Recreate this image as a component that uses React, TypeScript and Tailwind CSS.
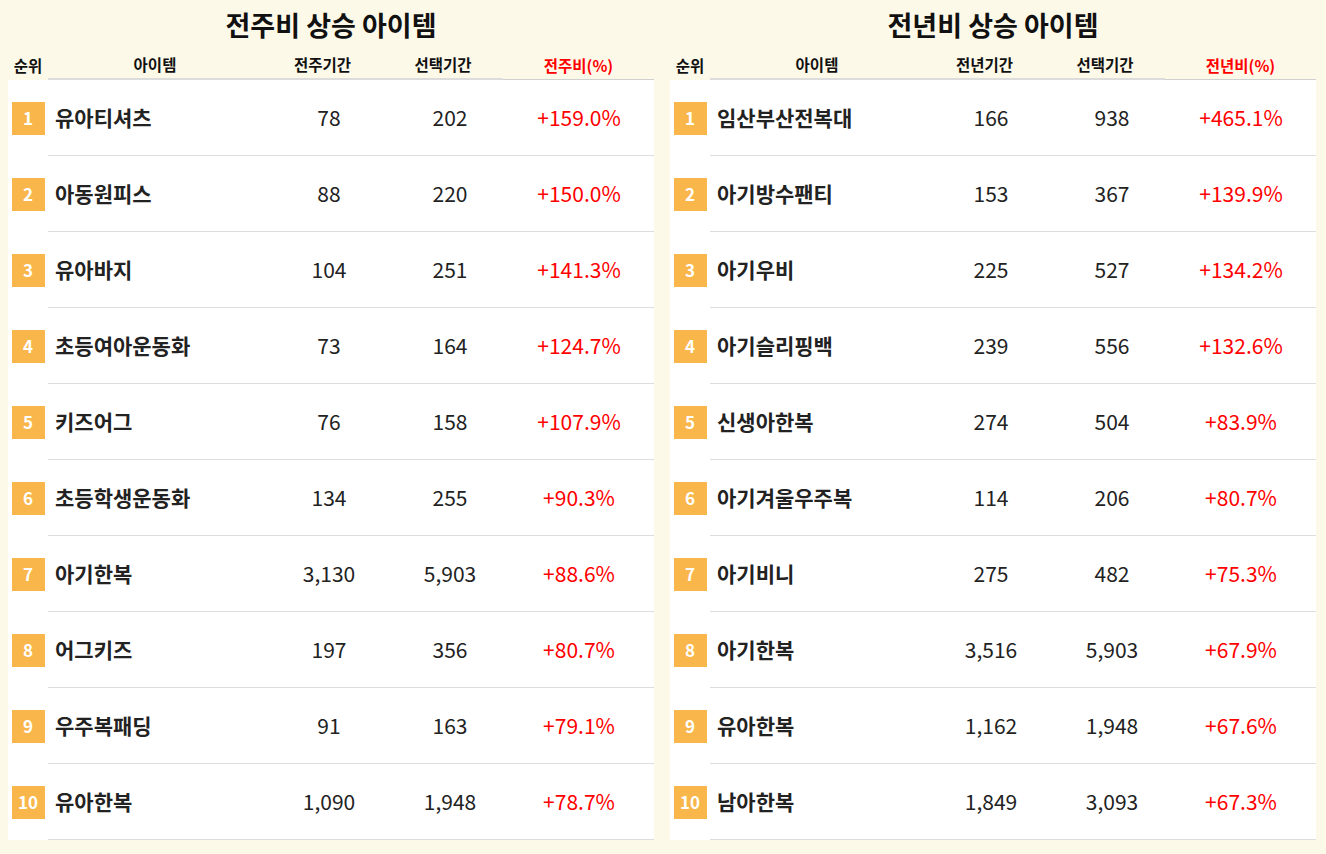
import React from "react";

type Row = { name: string; a: string; b: string; r: string };

const left: Row[] = [
  { name: "유아티셔츠", a: "78", b: "202", r: "+159.0%" },
  { name: "아동원피스", a: "88", b: "220", r: "+150.0%" },
  { name: "유아바지", a: "104", b: "251", r: "+141.3%" },
  { name: "초등여아운동화", a: "73", b: "164", r: "+124.7%" },
  { name: "키즈어그", a: "76", b: "158", r: "+107.9%" },
  { name: "초등학생운동화", a: "134", b: "255", r: "+90.3%" },
  { name: "아기한복", a: "3,130", b: "5,903", r: "+88.6%" },
  { name: "어그키즈", a: "197", b: "356", r: "+80.7%" },
  { name: "우주복패딩", a: "91", b: "163", r: "+79.1%" },
  { name: "유아한복", a: "1,090", b: "1,948", r: "+78.7%" },
];

const right: Row[] = [
  { name: "임산부산전복대", a: "166", b: "938", r: "+465.1%" },
  { name: "아기방수팬티", a: "153", b: "367", r: "+139.9%" },
  { name: "아기우비", a: "225", b: "527", r: "+134.2%" },
  { name: "아기슬리핑백", a: "239", b: "556", r: "+132.6%" },
  { name: "신생아한복", a: "274", b: "504", r: "+83.9%" },
  { name: "아기겨울우주복", a: "114", b: "206", r: "+80.7%" },
  { name: "아기비니", a: "275", b: "482", r: "+75.3%" },
  { name: "아기한복", a: "3,516", b: "5,903", r: "+67.9%" },
  { name: "유아한복", a: "1,162", b: "1,948", r: "+67.6%" },
  { name: "남아한복", a: "1,849", b: "3,093", r: "+67.3%" },
];

function Panel({ title, colA, colR, rows }: { title: string; colA: string; colR: string; rows: Row[] }) {
  return (
    <div className="w-[646px] flex flex-col">
      <div className="h-[50px] flex items-center justify-center text-[27px] font-bold text-[#111]">
        {title}
      </div>
      <div className="grid grid-cols-[40px_214px_121px_120px_151px] h-[30px] text-[15.5px] font-bold text-[#111]">
        <div className="flex items-center justify-center pt-[2px]">순위</div>
        <div className="flex items-center justify-center pt-[2px] border-b-2 border-[#dcdcdc]">아이템</div>
        <div className="flex items-center justify-center pt-[2px] border-b-2 border-[#dcdcdc]">{colA}</div>
        <div className="flex items-center justify-center pt-[2px] border-b-2 border-[#dcdcdc]">선택기간</div>
        <div className="flex items-center justify-center pt-[2px] border-b border-[#d0d0d0] text-[#ff0000]">{colR}</div>
      </div>
      <div className="bg-white flex flex-col">
        {rows.map((row, i) => (
          <div key={i} className="grid grid-cols-[40px_214px_134px_108px_150px] h-[76px]">
            <div className="flex items-center justify-center">
              <div className="w-[33px] h-[33px] bg-[#f9b64b] flex items-center justify-center text-white font-bold text-[17px]">
                {i + 1}
              </div>
            </div>
            <div className="flex items-center pl-[7px] pt-[1px] border-b border-[#dddddd] text-[21px] font-bold text-[#222]">
              {row.name}
            </div>
            <div className="flex items-center justify-center pt-[1px] border-b border-[#dddddd] text-[21px] text-[#222]">
              {row.a}
            </div>
            <div className="flex items-center justify-center pt-[1px] border-b border-[#dddddd] text-[21px] text-[#222]">
              {row.b}
            </div>
            <div className="flex items-center justify-center pt-[1px] border-b border-[#dddddd] text-[21px] text-[#ff0000]">
              {row.r}
            </div>
          </div>
        ))}
      </div>
    </div>
  );
}

export default function App() {
  return (
    <div
      className="min-h-[854px] w-[1326px] bg-[#fdf9e9] flex gap-4 pl-2"
      style={{ fontFamily: '"Noto Sans CJK KR", "Noto Sans", sans-serif' }}
    >
      <Panel title="전주비 상승 아이템" colA="전주기간" colR="전주비(%)" rows={left} />
      <Panel title="전년비 상승 아이템" colA="전년기간" colR="전년비(%)" rows={right} />
    </div>
  );
}
